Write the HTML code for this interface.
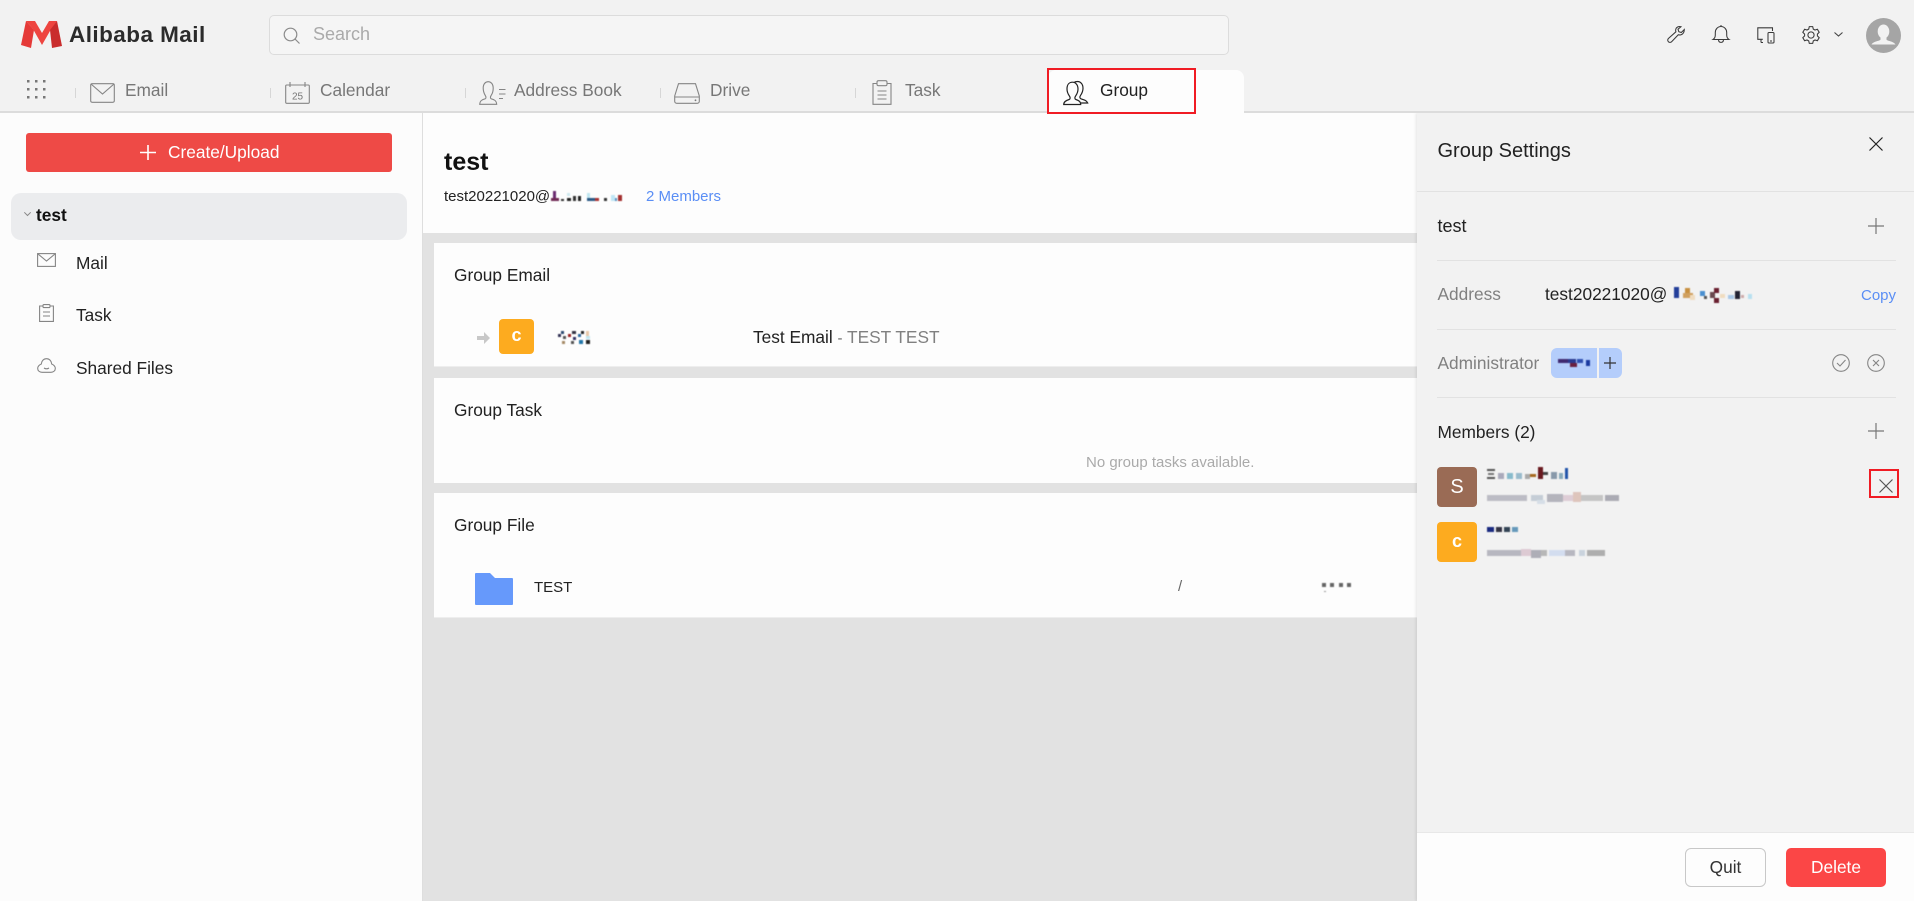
<!DOCTYPE html>
<html lang="en"><head><meta charset="utf-8"><title>Alibaba Mail - Group</title>
<style>
html,body{margin:0;padding:0;width:1914px;height:901px;overflow:hidden;background:#e2e2e2}
body{position:relative;font-family:"Liberation Sans",Arial,sans-serif;font-size:17.3px;color:#222}
.a{position:absolute}
.t{position:absolute;white-space:nowrap;line-height:24px;height:24px}
svg{position:absolute;overflow:visible}
.g{fill:none;stroke:#858585;stroke-width:1.1}
.d{fill:none;stroke:#3a3a3a;stroke-width:1.05}
.sep{position:absolute;width:1px;height:10px;top:88px;background:#d6d6d6}
.tab{color:#777}
.m{filter:blur(.55px)}
</style></head><body>

<!-- header -->
<div class="a" style="left:0;top:0;width:1914px;height:111px;background:#f2f2f2"></div>
<div class="a" style="left:0;top:111px;width:1914px;height:2px;background:#dcdcdc"></div>

<svg style="left:21px;top:21px" width="42" height="28" viewBox="0 0 42 28">
<polygon points="5,0 0,24 10,27 13,9" fill="#e53a38"/>
<polygon points="5,0 14,0 21,12 28,0 36,0 29,10 21,24 12,8" fill="#ee4540"/>
<polygon points="36,0 41,25 31,27 29,9" fill="#c92d2d"/>
</svg>
<div class="t" style="left:69px;top:23px;font-size:22.5px;font-weight:bold;color:#2b2b2b;letter-spacing:.45px">Alibaba Mail</div>

<div class="a" style="left:269px;top:15px;width:958px;height:38px;border:1px solid #dcdcdc;border-radius:5px;background:#f5f5f5"></div>
<svg style="left:283px;top:27px" width="18" height="18" viewBox="0 0 18 18"><circle cx="7.5" cy="7.5" r="6.3" fill="none" stroke="#8a8a8a" stroke-width="1.2"/><path d="M12 12l4.5 4.5" stroke="#8a8a8a" stroke-width="1.2"/></svg>
<div class="t" style="left:313px;top:22px;font-size:18px;color:#aaa">Search</div>

<!-- right tools -->
<svg style="left:1667px;top:26px" width="18" height="18" viewBox="0 0 18 18"><path class="d" d="M17.300 3.500l-3 3-2.500-.8-.8-2.500 3-2.500c-2.200-.7-4.600.3-5.200 2.400-.3 1-.2 1.900.1 2.700L1.400 12.500c-.9.9-.9 2.300 0 3.200.9.9 2.300.9 3.200 0l6.700-7c.9.3 1.900.3 2.800 0 2.100-.7 3.200-2.900 3.200-5.200z"/></svg>
<svg style="left:1712px;top:25px" width="18" height="18" viewBox="0 0 18 18"><path class="d" d="M1 14.500h16c-1.500-1-2.300-2.500-2.300-4.500V7.500C14.700 4.200 12.200 1.500 9 1.500S3.300 4.200 3.300 7.500V10c0 2-.8 3.500-2.300 4.500zM6.500 15c.2 1.500 1.200 2.400 2.500 2.400s2.300-.9 2.500-2.400M9 0v1.500"/></svg>
<svg style="left:1757px;top:27px" width="18" height="17" viewBox="0 0 18 17"><path class="d" d="M15.500 4V.8H.8v11.500h5M6 15.500H4M4 12.300v3.200"/><rect class="d" x="11" y="5.500" width="6" height="10.500" rx="1"/><path d="M13 14h2" stroke="#333"/></svg>
<svg style="left:1802px;top:26px" width="18" height="18" viewBox="0 0 18 18"><path class="d" d="M7.300 .6h3.400l.6 2.500 1.700.9 2.400-.7 1.800 3-1.800 1.800v1.800l1.800 1.800-1.800 3-2.400-.7-1.700.9-.6 2.500H7.300l-.6-2.500-1.700-.9-2.400.7-1.800-3L2.600 9.900V8.100L.8 6.300l1.800-3 2.400.7 1.700-.9z"/><circle class="d" cx="9" cy="9" r="3.100"/></svg>
<svg style="left:1834px;top:32px" width="9" height="5" viewBox="0 0 9 5"><path d="M.5.500l4 3.500 4-3.500" fill="none" stroke="#444" stroke-width="1.100"/></svg>
<svg style="left:1866px;top:18px" width="35" height="35" viewBox="0 0 35 35"><defs><clipPath id="c"><circle cx="17.500" cy="17.500" r="17.500"/></clipPath></defs><circle cx="17.500" cy="17.500" r="17.500" fill="#a5a5a5"/><g clip-path="url(#c)"><ellipse cx="17.500" cy="13.500" rx="5.800" ry="7" fill="#f2f2f2"/><path d="M14.500 19v2.500c0 1.500-7 1.500-9 5h24c-2-3.500-9-3.500-9-5V19z" fill="#f2f2f2"/></g></svg>

<!-- tabs -->
<svg style="left:27px;top:80px" width="19" height="19" viewBox="0 0 19 19" fill="#777"><rect x="0" y="0" width="2.500" height="2.500"/><rect x="8" y="0" width="2.500" height="2.500"/><rect x="16" y="0" width="2.500" height="2.500"/><rect x="0" y="8" width="2.500" height="2.500"/><rect x="8" y="8" width="2.500" height="2.500"/><rect x="16" y="8" width="2.500" height="2.500"/><rect x="0" y="16" width="2.500" height="2.500"/><rect x="8" y="16" width="2.500" height="2.500"/><rect x="16" y="16" width="2.500" height="2.500"/></svg>
<div class="sep" style="left:75px"></div>
<svg style="left:90px;top:83px" width="25" height="20" viewBox="0 0 25 20"><rect class="g" x=".7" y=".7" width="23.600" height="18.600" rx="1.500"/><path class="g" d="M1 1l11.500 10L24 1"/></svg>
<div class="t tab" style="left:125px;top:78px">Email</div>
<div class="sep" style="left:270px"></div>
<svg style="left:285px;top:82px" width="25" height="22" viewBox="0 0 25 22"><rect class="g" x=".7" y="3" width="23.600" height="18.300" rx="1"/><path class="g" d="M5 0v5M20 0v5"/><text x="12.500" y="17.500" font-family="Liberation Sans" font-size="10" text-anchor="middle" fill="#777">25</text></svg>
<div class="t tab" style="left:320px;top:78px">Calendar</div>
<div class="sep" style="left:465px"></div>
<svg style="left:479px;top:81px" width="28" height="24" viewBox="0 0 28 24"><path class="g" d="M.7 23.300h17c0-3-1.500-4.500-5.500-5.500-1-.3-1-2 0-3.500 1.800-2.500 2-5 2-7C14.200 3 12 .7 9.200.7S4.200 3 4.200 7c0 2 .3 4.500 2 7.300 1 1.500 1 3.200 0 3.500C2.200 18.800.7 20.300.7 23.300zM20 8.500h6.500M20 13h6.500M20 17.500h4"/></svg>
<div class="t tab" style="left:514px;top:78px">Address Book</div>
<div class="sep" style="left:660px"></div>
<svg style="left:674px;top:83px" width="26" height="21" viewBox="0 0 26 21"><path class="g" d="M.7 13L4.500.7h17L25.300 13v5.300c0 1-.8 2-2 2H2.700c-1.200 0-2-1-2-2zM.7 14h24.600"/><circle cx="21.500" cy="17.300" r=".9" fill="#777"/></svg>
<div class="t tab" style="left:710px;top:78px">Drive</div>
<div class="sep" style="left:855px"></div>
<svg style="left:872px;top:80px" width="20" height="25" viewBox="0 0 20 25"><path class="g" d="M5 3.500H1v20.800h18V3.500h-4"/><rect class="g" x="5" y=".7" width="10" height="5" rx="1.500"/><path class="g" d="M5.500 11h9M5.500 15h9M5.500 19h9"/></svg>
<div class="t tab" style="left:905px;top:78px">Task</div>

<div class="a" style="left:1048px;top:70px;width:196px;height:43px;background:#fdfdfd;border-radius:8px 8px 0 0"></div>
<svg style="left:1063px;top:81px" width="29" height="25" viewBox="0 0 29 25"><path d="M.7 23.500h17c0-2.700-1.300-3.900-4.800-5-1.200-.4-1.400-2-.3-3.500 1.700-2.400 2.400-4.700 2.400-7 0-4-2.300-6.800-5.500-6.800S4 3.500 4 8c0 2.300.7 4.600 2.400 7 1.100 1.500.9 3.100-.3 3.500-3.500 1.100-5.400 2.300-5.400 5z" fill="none" stroke="#222" stroke-width="1.200"/><path d="M11 1.500c1-.7 2.200-1 3.500-1 3.200 0 5.500 2.800 5.500 6.800 0 2.300-.7 4.600-2.400 7-1.100 1.500-.9 3.100.3 3.500 3.500 1.100 6 1.800 6.800 4.200H18" fill="none" stroke="#222" stroke-width="1.200"/></svg>
<div class="t" style="left:1100px;top:78px;color:#222">Group</div>

<!-- sidebar -->
<div class="a" style="left:0;top:113px;width:422px;height:788px;background:#fcfcfc;border-right:1px solid #dedede"></div>
<div class="a" style="left:26px;top:133px;width:366px;height:39px;background:#ee4a46;border-radius:3px"></div>
<svg style="left:140px;top:145px" width="16" height="15" viewBox="0 0 16 15"><path d="M8 0v15M0 7.500h16" stroke="#fff" stroke-width="1.600"/></svg>
<div class="t" style="left:168px;top:140px;color:#fff">Create/Upload</div>
<div class="a" style="left:11px;top:193px;width:396px;height:47px;background:#ebecee;border-radius:10px"></div>
<svg style="left:24px;top:212px" width="7" height="4" viewBox="0 0 7 4"><path d="M.3.300L3.500 3.500 6.700.300" fill="none" stroke="#888"/></svg>
<div class="t" style="left:36px;top:203px;font-weight:bold;color:#111">test</div>
<svg style="left:37px;top:253px" width="19" height="14" viewBox="0 0 19 14"><rect class="g" x=".6" y=".6" width="17.800" height="12.800"/><path class="g" d="M1 1l8.500 7L18 1"/></svg>
<div class="t" style="left:76px;top:251px">Mail</div>
<svg style="left:39px;top:304px" width="15" height="18" viewBox="0 0 15 18"><path class="g" d="M4 2H.6v15.400h13.800V2H11"/><rect class="g" x="4" y=".6" width="7" height="3" rx="1"/><path class="g" d="M4 8h7M4 12h7"/></svg>
<div class="t" style="left:76px;top:303px">Task</div>
<svg style="left:37px;top:358px" width="19" height="15" viewBox="0 0 19 15"><path class="g" d="M9.500 .7C6.500 .7 4.500 3 4.300 6 2 7 .7 8.700 .7 10.500c0 2.300 2 3.800 4.300 3.800h9c2.300 0 4.300-1.500 4.300-3.800 0-1.800-1.300-3.500-3.600-4.500C14.500 3 12.500 .7 9.500 .7z"/><path class="g" d="M7 10c1.500 1 3.500 1 5 0"/></svg>
<div class="t" style="left:76px;top:356px">Shared Files</div>

<!-- main -->
<div class="a" style="left:423px;top:113px;width:994px;height:120px;background:#fdfdfd"></div>
<div class="t" style="left:444px;top:150px;font-size:25px;font-weight:bold;color:#111">test</div>
<div class="t" style="left:444px;top:185px;font-size:15px;color:#222">test20221020@</div>
<svg class="m" style="left:551px;top:190px" width="72" height="14" viewBox="0 0 72 14">
<rect x="2" y="1" width="3" height="10" fill="#6b2b70"/><rect x="0" y="8" width="8" height="3" fill="#702a55"/><rect x="10" y="9" width="3" height="2" fill="#333"/><rect x="16" y="8" width="4" height="3" fill="#222"/><rect x="22" y="6" width="3" height="5" fill="#333"/><rect x="27" y="6" width="3" height="5" fill="#222"/><rect x="16" y="3" width="3" height="3" fill="#cfe9ef"/><rect x="36" y="3" width="3" height="5" fill="#bfe6f0"/><rect x="36" y="8" width="8" height="3" fill="#2c5a86"/><rect x="44" y="8" width="4" height="3" fill="#a33"/><rect x="53" y="8" width="3" height="3" fill="#333"/><rect x="60" y="5" width="4" height="6" fill="#bfe6f5"/><rect x="64" y="8" width="2" height="3" fill="#5a90c0"/><rect x="67" y="5" width="4" height="6" fill="#a33030"/>
</svg>
<div class="t" style="left:646px;top:185px;font-size:15px;color:#5a8ef5">2 Members</div>

<div class="a" style="left:434px;top:243px;width:983px;height:124px;background:#fdfdfd;box-shadow:inset 0 -1px 0 #eee"></div>
<div class="a" style="left:434px;top:378px;width:983px;height:105px;background:#fdfdfd"></div>
<div class="a" style="left:434px;top:493px;width:983px;height:125px;background:#fdfdfd;box-shadow:inset 0 -1px 0 #eee"></div>

<div class="t" style="left:454px;top:263px">Group Email</div>
<svg style="left:477px;top:332px" width="13" height="12" viewBox="0 0 13 12"><path d="M0 4h7V0l6 6-6 6V8H0z" fill="#c8c8c8"/></svg>
<div class="a" style="left:499px;top:319px;width:35px;height:35px;background:#fdab1f;border-radius:4px;color:#fff;font-size:18px;font-weight:bold;line-height:33px;text-align:center">c</div>
<svg class="m" style="left:558px;top:331px" width="36" height="14" viewBox="0 0 36 14">
<rect x="0" y="3" width="3" height="3" fill="#335"/><rect x="3" y="0" width="3" height="3" fill="#2c4a70"/><rect x="5" y="5" width="3" height="3" fill="#555"/><rect x="4" y="10" width="3" height="3" fill="#a58a66"/><rect x="10" y="3" width="3" height="3" fill="#922"/><rect x="14" y="0" width="4" height="3" fill="#334"/><rect x="15" y="6" width="3" height="3" fill="#336"/><rect x="13" y="10" width="3" height="3" fill="#555"/><rect x="20" y="3" width="3" height="3" fill="#2c6aa0"/><rect x="23" y="0" width="3" height="3" fill="#222"/><rect x="21" y="9" width="4" height="4" fill="#27a"/><rect x="28" y="0" width="3" height="5" fill="#e8c8a8"/><rect x="28" y="5" width="4" height="3" fill="#bfe6f0"/><rect x="28" y="9" width="4" height="4" fill="#222"/>
</svg>
<div class="t" style="left:753px;top:325px">Test Email <span style="color:#666;font-size:15px">-</span> <span style="color:#808080">TEST TEST</span></div>

<div class="t" style="left:454px;top:398px">Group Task</div>
<div class="t" style="left:1086px;top:451px;font-size:15px;color:#aaa">No group tasks available.</div>

<div class="t" style="left:454px;top:513px">Group File</div>
<svg style="left:475px;top:573px" width="38" height="32" viewBox="0 0 38 32"><path d="M0 1a1 1 0 011-1h14l5 5h17a1 1 0 011 1v25a1 1 0 01-1 1H1a1 1 0 01-1-1z" fill="#6699fb"/></svg>
<div class="t" style="left:534px;top:576px;font-size:15px;color:#222">TEST</div>
<div class="t" style="left:1178px;top:575px;font-size:15px;color:#666">/</div>
<svg class="m" style="left:1322px;top:583px" width="30" height="12" viewBox="0 0 30 12" fill="#666"><rect x="0" y="0" width="4" height="4"/><rect x="8" y="0" width="4" height="4"/><rect x="17" y="0" width="4" height="4"/><rect x="25" y="0" width="4" height="4"/><rect x="2" y="8" width="2" height="1" fill="#999"/></svg>

<!-- right panel -->
<div class="a" style="left:1417px;top:113px;width:497px;height:788px;background:#f2f2f2;box-shadow:-1px 0 3px rgba(0,0,0,.1);clip-path:inset(0 0 0 -8px)"></div>
<div class="t" style="left:1437.500px;top:139px;font-size:20px;color:#222">Group Settings</div>
<svg style="left:1869px;top:137px" width="14" height="14" viewBox="0 0 14 14"><path d="M.5.500l13 13M13.500.500l-13 13" stroke="#222" stroke-width="1.200"/></svg>
<div class="a" style="left:1417px;top:191px;width:497px;height:1px;background:#e2e2e2"></div>
<div class="t" style="left:1437.500px;top:214px;font-size:18px;color:#222">test</div>
<svg style="left:1868px;top:218px" width="16" height="16" viewBox="0 0 16 16"><path d="M8 0v16M0 8h16" stroke="#777" stroke-width="1.200"/></svg>
<div class="a" style="left:1437px;top:260px;width:459px;height:1px;background:#e2e2e2"></div>
<div class="t" style="left:1437.500px;top:282px;color:#808080">Address</div>
<div class="t" style="left:1545px;top:282px;color:#222">test20221020@</div>
<svg class="m" style="left:1668px;top:286px" width="88" height="18" viewBox="0 0 88 18">
<rect x="6" y="1" width="5" height="11" fill="#243f9a"/><rect x="17" y="2" width="5" height="5" fill="#c89040"/><rect x="15" y="7" width="10" height="5" fill="#d0a060"/><rect x="22" y="9" width="5" height="5" fill="#f0dcc0"/><rect x="32" y="5" width="5" height="5" fill="#4a90d0"/><rect x="36" y="10" width="3" height="3" fill="#555"/><rect x="42" y="6" width="5" height="6" fill="#6a4a50"/><rect x="46" y="2" width="5" height="5" fill="#6a2030"/><rect x="46" y="12" width="5" height="5" fill="#6a2030"/><rect x="52" y="8" width="5" height="4" fill="#f0dcc0"/><rect x="60" y="9" width="6" height="4" fill="#a8c8e8"/><rect x="67" y="5" width="5" height="8" fill="#223"/><rect x="73" y="9" width="3" height="3" fill="#caa"/><rect x="80" y="8" width="4" height="5" fill="#b8e0f0"/>
</svg>
<div class="t" style="left:1861px;top:284px;font-size:15px;color:#5a8ef5">Copy</div>
<div class="a" style="left:1437px;top:329px;width:459px;height:1px;background:#e2e2e2"></div>
<div class="t" style="left:1437.500px;top:351px;color:#808080">Administrator</div>
<div class="a" style="left:1551px;top:348px;width:46px;height:30px;background:#b4cdfb;border-radius:6px 0 0 6px"></div>
<div class="a" style="left:1599px;top:348px;width:23px;height:30px;background:#b4cdfb;border-radius:0 6px 6px 0"></div>
<svg class="m" style="left:1558px;top:358px" width="33" height="10" viewBox="0 0 33 10"><rect x="0" y="1" width="10" height="4" fill="#402a70"/><rect x="10" y="1" width="8" height="4" fill="#2a3a90"/><rect x="12" y="5" width="7" height="4" fill="#6a2040"/><rect x="19" y="1" width="6" height="4" fill="#3050b0"/><rect x="28" y="2" width="4" height="6" fill="#1a3aa0"/></svg>
<svg style="left:1604px;top:357px" width="12" height="12" viewBox="0 0 12 12"><path d="M6 0v12M0 6h12" stroke="#333" stroke-width="1.200"/></svg>
<svg style="left:1832px;top:354px" width="18" height="18" viewBox="0 0 18 18"><circle class="g" cx="9" cy="9" r="8.300"/><path class="g" d="M5 9l3 3 5.500-6"/></svg>
<svg style="left:1867px;top:354px" width="18" height="18" viewBox="0 0 18 18"><circle class="g" cx="9" cy="9" r="8.300"/><path class="g" d="M6 6l6 6M12 6l-6 6"/></svg>
<div class="a" style="left:1437px;top:397px;width:459px;height:1px;background:#e2e2e2"></div>
<div class="t" style="left:1437.500px;top:420px;color:#222">Members (2)</div>
<svg style="left:1868px;top:423px" width="16" height="16" viewBox="0 0 16 16"><path d="M8 0v16M0 8h16" stroke="#777" stroke-width="1.200"/></svg>

<div class="a" style="left:1437px;top:467px;width:40px;height:40px;background:#9a6b55;border-radius:4px;color:#fff;font-size:20px;line-height:40px;text-align:center">S</div>
<svg class="m" style="left:1487px;top:467px" width="82" height="14" viewBox="0 0 82 14">
<rect x="0" y="2" width="8" height="2" fill="#555"/><rect x="1" y="6" width="6" height="2" fill="#777"/><rect x="0" y="10" width="8" height="2" fill="#555"/><rect x="11" y="6" width="6" height="6" fill="#aab"/><rect x="20" y="6" width="6" height="6" fill="#8bc"/><rect x="29" y="6" width="6" height="6" fill="#9bc"/><rect x="38" y="7" width="5" height="5" fill="#aaa"/><rect x="43" y="7" width="6" height="3" fill="#a66a20"/><rect x="51" y="0" width="5" height="12" fill="#6a1a20"/><rect x="56" y="5" width="5" height="3" fill="#444"/><rect x="64" y="5" width="6" height="7" fill="#89a"/><rect x="72" y="6" width="4" height="6" fill="#8ab"/><rect x="78" y="1" width="3" height="11" fill="#25a"/></svg>
<svg class="m" style="left:1487px;top:492px" width="132" height="14" viewBox="0 0 132 14" opacity=".5">
<rect x="0" y="3" width="40" height="6" fill="#889"/><rect x="44" y="3" width="12" height="6" fill="#9ab"/><rect x="50" y="8" width="8" height="4" fill="#bcd"/><rect x="60" y="2" width="16" height="8" fill="#778"/><rect x="76" y="3" width="10" height="6" fill="#cab"/><rect x="86" y="0" width="8" height="10" fill="#c98"/><rect x="94" y="3" width="22" height="6" fill="#999"/><rect x="118" y="3" width="14" height="6" fill="#667"/></svg>

<div class="a" style="left:1437px;top:522px;width:40px;height:40px;background:#fdab1f;border-radius:4px;color:#fff;font-size:18px;line-height:38px;text-align:center;font-weight:bold">c</div>
<svg class="m" style="left:1487px;top:525px" width="32" height="9" viewBox="0 0 32 9"><rect x="0" y="2" width="7" height="5" fill="#1a2a80"/><rect x="9" y="2" width="6" height="5" fill="#334"/><rect x="17" y="2" width="6" height="5" fill="#345"/><rect x="25" y="2" width="6" height="5" fill="#69b"/></svg>
<svg class="m" style="left:1487px;top:548px" width="120" height="12" viewBox="0 0 120 12" opacity=".55">
<rect x="0" y="2" width="34" height="6" fill="#889"/><rect x="34" y="1" width="10" height="7" fill="#cab"/><rect x="44" y="2" width="10" height="8" fill="#778"/><rect x="54" y="2" width="6" height="6" fill="#888"/><rect x="62" y="2" width="16" height="6" fill="#bce"/><rect x="78" y="2" width="10" height="6" fill="#889"/><rect x="92" y="2" width="6" height="6" fill="#abc"/><rect x="100" y="2" width="18" height="6" fill="#777"/></svg>

<div class="a" style="left:1869px;top:469px;width:26px;height:25px;border:2px solid #f01c24"></div>
<svg style="left:1879px;top:479px" width="14" height="14" viewBox="0 0 14 14"><path d="M.5.500l13 13M13.500.500l-13 13" stroke="#555" stroke-width="1.200"/></svg>

<!-- footer -->
<div class="a" style="left:1417px;top:832px;width:497px;height:69px;background:#fdfdfd;border-top:1px solid #e8e8e8"></div>
<div class="a" style="left:1685px;top:848px;width:79px;height:37px;border:1px solid #c8c8c8;border-radius:6px;text-align:center;line-height:37px;color:#333">Quit</div>
<div class="a" style="left:1786px;top:848px;width:100px;height:39px;background:#fb4646;border-radius:5px;text-align:center;line-height:39px;color:#fff">Delete</div>

<!-- group tab highlight -->
<div class="a" style="left:1047px;top:68px;width:145px;height:42px;border:2px solid #f01c24"></div>

</body></html>
